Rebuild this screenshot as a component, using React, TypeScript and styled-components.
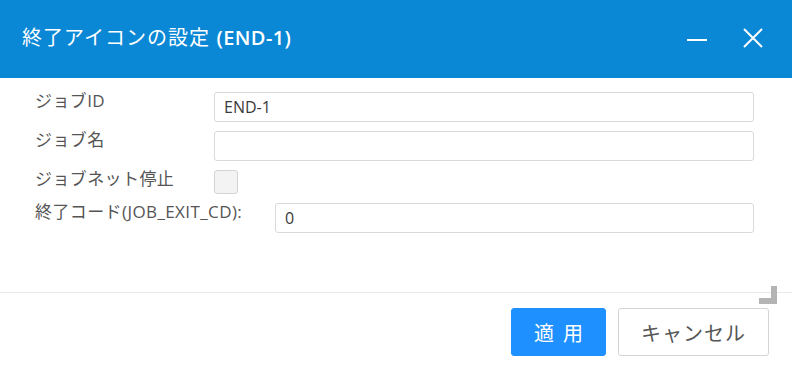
import type { FC } from 'react';
import styled, { createGlobalStyle } from 'styled-components';

const GlobalStyle = createGlobalStyle`
  html, body {
    margin: 0;
    padding: 0;
    background: #ffffff;
  }
  body {
    font-family: 'Open Sans', 'Noto Sans CJK JP', sans-serif;
  }
`;

type FieldRow = {
  readonly label: string;
  readonly kind: 'text' | 'check';
  readonly value?: string;
  readonly wide?: boolean;
};

const rows: FieldRow[] = [
  { label: 'ジョブID', kind: 'text', value: 'END-1' },
  { label: 'ジョブ名', kind: 'text', value: '' },
  { label: 'ジョブネット停止', kind: 'check' },
  { label: '終了コード(JOB_EXIT_CD):', kind: 'text', value: '0', wide: true },
];

const App: FC = () => (
  <>
    <GlobalStyle />
    <Dialog>
      <Header>
        <Title>
          <Kana>終了アイコンの設定</Kana> <Strong>(END-1)</Strong>
        </Title>
        <HeaderTools>
          <ToolButton aria-label="minimize">
            <svg width="22" height="22" viewBox="0 0 22 22">
              <path d="M1 13h20" stroke="#fff" strokeWidth="2" />
            </svg>
          </ToolButton>
          <ToolButton aria-label="close">
            <svg width="22" height="22" viewBox="0 0 22 22">
              <path d="M2 2L20 20M20 2L2 20" stroke="#fff" strokeWidth="2" />
            </svg>
          </ToolButton>
        </HeaderTools>
      </Header>
      <Body>
        {rows.map((row) => (
          <Row key={row.label} $wide={row.wide}>
            <Label>{row.label}</Label>
            {row.kind === 'text' ? (
              <TextInput defaultValue={row.value} />
            ) : (
              <CheckBox />
            )}
          </Row>
        ))}
      </Body>
      <Footer>
        <Grip />
        <Buttons>
          <PrimaryButton>適用</PrimaryButton>
          <DefaultButton>キャンセル</DefaultButton>
        </Buttons>
      </Footer>
    </Dialog>
  </>
);

export default App;

const Dialog = styled.div`
  width: 792px;
  height: 371px;
  display: flex;
  flex-direction: column;
  background: #fff;
  overflow: hidden;
`;

const Header = styled.div`
  height: 78px;
  flex: none;
  background: #0a87d5;
  display: flex;
  align-items: center;
  justify-content: space-between;
  padding: 0 28px 0 22px;
  box-sizing: border-box;
`;

const Title = styled.div`
  color: #fff;
  font-size: 20px;
  font-family: 'Noto Sans CJK JP', sans-serif;
  font-weight: 400;
  margin-top: -6px;
  white-space: nowrap;
  word-spacing: 2px;
`;

const Kana = styled.span`
  letter-spacing: 1px;
`;

const Strong = styled.span`
  font-family: 'Open Sans', sans-serif;
  font-weight: 600;
  letter-spacing: 0.4px;
`;

const HeaderTools = styled.div`
  display: flex;
  align-items: center;
  gap: 34px;
  margin-top: -3px;
`;

const ToolButton = styled.span`
  display: flex;
  width: 22px;
  height: 22px;
`;

const Body = styled.div`
  flex: 1;
  padding: 14px 38px 0 35px;
  display: flex;
  flex-direction: column;
  gap: 9px;
`;

const Row = styled.div<{ readonly $wide?: boolean }>`
  display: grid;
  grid-template-columns: ${({ $wide }) => ($wide ? '240px' : '179px')} 1fr;
  align-items: start;
  min-height: 24px;
`;

const Label = styled.div`
  color: #555;
  font-size: 17px;
  line-height: 20px;
  letter-spacing: 0.4px;
  font-family: 'Open Sans', 'Noto Sans CJK JP', sans-serif;
  margin-top: -1px;
  white-space: nowrap;
`;

const TextInput = styled.input`
  height: 30px;
  box-sizing: border-box;
  border: 1px solid #d9d9d9;
  border-radius: 3px;
  padding: 0 9px;
  font-size: 16px;
  font-family: 'Open Sans', sans-serif;
  color: #3a3a3a;
  outline: none;
  width: 100%;
`;

const CheckBox = styled.span`
  width: 24px;
  height: 24px;
  box-sizing: border-box;
  border: 1px solid #d4d4d4;
  border-radius: 3px;
  background: #f3f3f3;
`;

const Footer = styled.div`
  position: relative;
  border-top: 1px solid #e8e8e8;
  height: 79px;
  flex: none;
  box-sizing: border-box;
`;

const Grip = styled.div`
  position: absolute;
  right: 15px;
  top: -7px;
  width: 18px;
  height: 18px;
  border-right: 6px solid #b4b4b4;
  border-bottom: 6px solid #b4b4b4;
  box-sizing: border-box;
`;

const Buttons = styled.div`
  display: flex;
  justify-content: flex-end;
  gap: 12px;
  padding: 15px 23px 0 0;
`;

const ButtonBase = styled.button`
  height: 48px;
  border-radius: 3px;
  font-size: 20px;
  font-family: 'Noto Sans CJK JP', sans-serif;
  letter-spacing: 1px;
  cursor: pointer;
`;

const PrimaryButton = styled(ButtonBase)`
  width: 95px;
  background: #1e90ff;
  border: 1px solid #1e90ff;
  color: #fff;
  letter-spacing: 9px;
  text-indent: 9px;
`;

const DefaultButton = styled(ButtonBase)`
  width: 151px;
  background: #fff;
  border: 1px solid #d4d4d4;
  color: #555;
`;
